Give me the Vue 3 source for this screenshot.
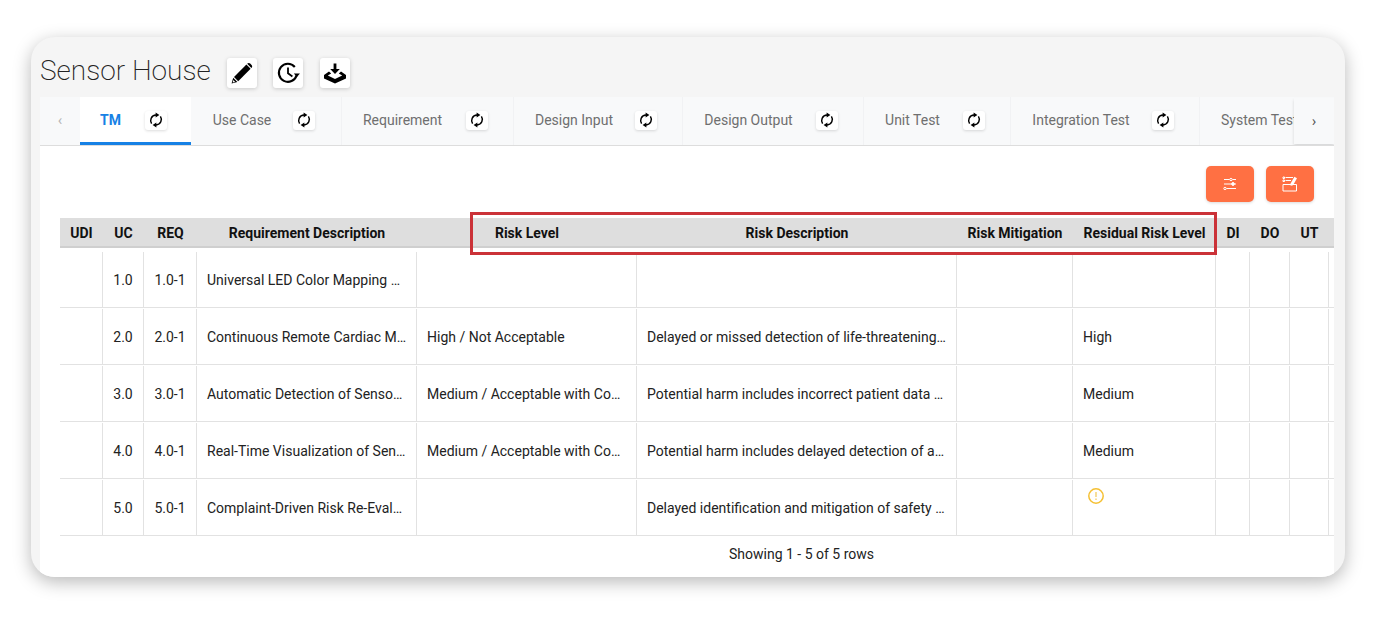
<script setup>
const tabs = [
  { name: 'TM', width: 111, gap: 24, active: true },
  { name: 'Use Case', width: 151, gap: 22 },
  { name: 'Requirement', width: 172, gap: 24 },
  { name: 'Design Input', width: 169, gap: 22 },
  { name: 'Design Output', width: 181, gap: 23 },
  { name: 'Unit Test', width: 147, gap: 23 },
  { name: 'Integration Test', width: 189, gap: 22 },
]

const headers = [
  'UDI', 'UC', 'REQ', 'Requirement Description', 'Risk Level', 'Risk Description',
  'Risk Mitigation', 'Residual Risk Level', 'DI', 'DO', 'UT', '',
]

const rows = [
  { uc: '1.0', req: '1.0-1', desc: 'Universal LED Color Mapping …', level: '', risk: '', residual: '' },
  { uc: '2.0', req: '2.0-1', desc: 'Continuous Remote Cardiac M…', level: 'High / Not Acceptable', risk: 'Delayed or missed detection of life-threatening…', residual: 'High' },
  { uc: '3.0', req: '3.0-1', desc: 'Automatic Detection of Senso…', level: 'Medium / Acceptable with Co…', risk: 'Potential harm includes incorrect patient data …', residual: 'Medium' },
  { uc: '4.0', req: '4.0-1', desc: 'Real-Time Visualization of Sen…', level: 'Medium / Acceptable with Co…', risk: 'Potential harm includes delayed detection of a…', residual: 'Medium' },
  { uc: '5.0', req: '5.0-1', desc: 'Complaint-Driven Risk Re-Eval…', level: '', risk: 'Delayed identification and mitigation of safety …', residual: '', warn: true },
]
</script>

<template>
  <div class="page">
    <main class="card">
      <header class="title-row">
        <h1 class="title">Sensor House</h1>
        <div class="title-actions">
          <button class="icon-btn">
            <svg width="24" height="24" viewBox="0 0 24 24">
              <path d="M16.4 3.6 20.6 7.8 8.2 20.2 4 16Z" fill="#000" />
              <path d="M17.4 2.6c.8-.8 2-.8 2.8 0l1.4 1.4c.8.8.8 2 0 2.8l-.2.2-4.2-4.2Z" fill="#000" />
              <path d="M3.2 16.8 7.4 21 1.6 22.6Z" fill="#000" />
              <path d="M3.3 19 5.2 20.9 2.7 21.5Z" fill="#fff" />
            </svg>
          </button>
          <button class="icon-btn">
            <svg width="24" height="24" viewBox="0 0 24 24" fill="none" stroke="#000" stroke-width="2.1">
              <path d="M20.6 14.2A9 9 0 1 1 18.8 6" />
              <path d="M12 6.5V12.2L16.4 15.4" stroke-width="1.8" />
              <path d="M17.8 12.6 21 16l2.9-3.6Z" fill="#000" stroke="none" />
            </svg>
          </button>
          <button class="icon-btn">
            <svg width="24" height="24" viewBox="0 0 24 24" fill="#000">
              <path d="M10.6 2.500h2.800v5.500h3.400L12 13 7.200 8h3.400Z" />
              <path d="M6 10.400 8.200 12.400 4.800 14.600 12 18 19.200 14.600 15.800 12.400 18 10.400 23 14v3.400L12 22.600 1 17.400V14Z" />
            </svg>
          </button>
        </div>
      </header>

      <nav class="tabs">
        <button class="tab-arrow tab-prev">‹</button>
        <div
          v-for="tab in tabs"
          :key="tab.name"
          class="tab"
          :class="{ 'tab--active': tab.active }"
          :style="{ width: tab.width + 'px', columnGap: tab.gap + 'px' }"
        >
          <span>{{ tab.name }}</span>
          <span class="sync">
            <svg width="14" height="16" viewBox="0 0 14 16" fill="none" stroke="#000" stroke-width="1.5">
              <path d="M2.600 11.600C.4 8.400 2.200 3.400 7 3.100" />
              <path d="M11.400 4.400C13.600 7.600 11.800 12.600 7 12.900" />
              <path d="M6.600 .4 10.400 3 6.600 5.600Z" fill="#000" stroke="none" />
              <path d="M7.400 10.400 3.600 13 7.400 15.600Z" fill="#000" stroke="none" />
            </svg>
          </span>
        </div>
        <div class="tab tab--cut"><span>System Test</span></div>
        <button class="tab-arrow tab-next">›</button>
      </nav>

      <section class="panel">
        <div class="toolbar">
          <button class="orange-btn">
            <svg width="14" height="14" viewBox="0 0 14 14" fill="none" stroke="#fff" stroke-width="1">
              <path d="M1 2.500H6.500M9.500 2.500H13M1 7H8.500M11.500 7H13M3.500 11.500H13" />
              <circle cx="8" cy="2.500" r="1.200" />
              <circle cx="10" cy="7" r="1.400" fill="#fff" />
              <circle cx="2" cy="11.500" r="1.200" />
            </svg>
          </button>
          <button class="orange-btn">
            <svg width="16" height="16" viewBox="0 0 16 16" fill="none" stroke="#fff" stroke-width="1">
              <path d="M3.500 1.500H11M3.500 4.500H9" />
              <path d="M1 1H2.500V2.500H1ZM1 4H2.500V5.500H1Z" />
              <path d="M1 8.500H14.500V15H1Z" />
              <path d="M12.400 .8 15 2.200 11 9.200 8.600 9.800 8.600 7.600Z" fill="#fff" stroke="none" />
            </svg>
          </button>
        </div>

        <div class="table-wrap">
          <div class="thead">
            <div v-for="(head, i) in headers" :key="i" class="th">{{ head }}</div>
          </div>
          <div v-for="row in rows" :key="row.uc" class="tr">
            <div class="td"></div>
            <div class="td td--center">{{ row.uc }}</div>
            <div class="td td--center">{{ row.req }}</div>
            <div class="td">{{ row.desc }}</div>
            <div class="td">{{ row.level }}</div>
            <div class="td">{{ row.risk }}</div>
            <div class="td"></div>
            <div class="td" :class="{ 'td--warn': row.warn }">
              <svg v-if="row.warn" width="18" height="18" viewBox="0 0 18 18" fill="none">
                <circle cx="9" cy="9" r="7.200" stroke="#f5c033" stroke-width="1.500" />
                <path d="M9 5V10M9 11.600V13" stroke="#f5d37a" stroke-width="1.500" />
              </svg>
              {{ row.residual }}
            </div>
            <div class="td"></div>
            <div class="td"></div>
            <div class="td"></div>
            <div class="td td--last"></div>
          </div>
          <div class="highlight"></div>
        </div>

        <p class="pagination">Showing 1 - 5 of 5 rows</p>
      </section>
    </main>
  </div>
</template>

<style>
html,
body {
  margin: 0;
  background: #fff;
}
</style>

<style scoped>
.page {
  width: 1376px;
  height: 625px;
  padding: 37px 31px 48px;
  box-sizing: border-box;
  overflow: hidden;
  font-family: Roboto, "Liberation Sans", sans-serif;
  color: #212121;
}

.card {
  height: 540px;
  padding: 0 11px 0 9px;
  box-sizing: border-box;
  display: flex;
  flex-direction: column;
  background: #f5f5f5;
  border-radius: 24px;
  box-shadow: 0 5px 18px rgba(0, 0, 0, 0.28);
  overflow: hidden;
}

.title-row {
  height: 60px;
  padding-top: 16px;
  box-sizing: border-box;
  display: flex;
  align-items: flex-start;
}

.title {
  margin: 0;
  font-size: 28px;
  line-height: 36px;
  font-weight: 200;
  color: #222;
}

.title-actions {
  display: flex;
  gap: 16px;
  margin-left: 16px;
  margin-top: 5px;
}

.icon-btn {
  width: 30px;
  height: 30px;
  padding: 0;
  border: 0;
  border-radius: 3px;
  background: #fff;
  box-shadow: 0 1px 4px rgba(0, 0, 0, 0.18);
  display: flex;
  align-items: center;
  justify-content: center;
}

.icon-btn:last-child {
  margin-left: 1px;
}

.tabs {
  position: relative;
  height: 49px;
  display: flex;
  background: #f8f9fa;
  border-bottom: 1px solid #ddd;
  box-sizing: border-box;
  overflow: hidden;
}

.tab {
  flex: none;
  box-sizing: border-box;
  height: 48px;
  padding: 0 4px 2px 0;
  display: flex;
  align-items: center;
  justify-content: center;
  font-size: 14px;
  color: #6f6f6f;
  border-right: 1px solid #f1f2f4;
}

.tab--active {
  background: #fff;
  color: #1681e5;
  font-weight: 700;
  border-right: 0;
  border-bottom: 3px solid #1681e5;
  padding: 1px 4px 0 0;
}

.tab--cut {
  width: 130px;
  justify-content: flex-start;
  padding-left: 21px;
  border-right: 0;
}

.sync {
  width: 22px;
  height: 19px;
  background: #fff;
  border-radius: 3px;
  box-shadow: 0 1px 3px rgba(0, 0, 0, 0.14);
  display: flex;
  align-items: center;
  justify-content: center;
}

.tab-arrow {
  flex: none;
  width: 40px;
  height: 46px;
  padding: 0;
  border: 0;
  background: #f8f9fa;
  font-family: inherit;
  font-size: 15px;
}

.tab-prev {
  color: #b5b5b5;
}

.tab-next {
  position: absolute;
  right: 0;
  top: 1px;
  color: #555;
  box-shadow: 0 2px 3px rgba(0, 0, 0, 0.14);
}

.panel {
  flex: 1;
  background: #fff;
  padding: 20px 0 0 20px;
}

.toolbar {
  display: flex;
  justify-content: flex-end;
  gap: 12px;
  padding-right: 20px;
}

.orange-btn {
  width: 48px;
  height: 36px;
  padding: 0;
  border: 0;
  border-radius: 5px;
  background: #ff7043;
  box-shadow: 0 1px 3px rgba(0, 0, 0, 0.15);
  display: flex;
  align-items: center;
  justify-content: center;
}

.table-wrap {
  position: relative;
  margin-top: 16px;
}

.thead,
.tr {
  display: grid;
  grid-template-columns: 43px 41px 53px 220px 220px 320px 116px 143px 34px 40px 39px 5px;
}

.thead {
  height: 30px;
  margin-bottom: 4px;
  background: #dedede;
  border-bottom: 2px solid #cfcfcf;
  box-sizing: border-box;
}

.th {
  font-size: 14px;
  line-height: 30px;
  font-weight: 700;
  color: #111;
  text-align: center;
  white-space: nowrap;
}

.tr {
  height: 56px;
  margin-bottom: 1px;
  border-bottom: 1px solid #e2e2e2;
  box-sizing: border-box;
}

.td {
  padding: 1px 10px 0;
  font-size: 14px;
  line-height: 55px;
  color: #222;
  white-space: nowrap;
  overflow: hidden;
  border-right: 1px solid #e2e2e2;
}

.td--center {
  padding: 1px 0 0;
  text-align: center;
}

.td--warn {
  line-height: 1;
  padding-top: 7px;
  padding-left: 14px;
}

.td--last {
  border-right: 0;
}

.highlight {
  position: absolute;
  left: 410px;
  top: -6px;
  width: 747px;
  height: 43px;
  box-sizing: border-box;
  border: 3px solid #cb3238;
  pointer-events: none;
}

.pagination {
  margin: 9px 0 0;
  padding-left: 669px;
  font-size: 14px;
  line-height: 18px;
  color: #222;
}
</style>
